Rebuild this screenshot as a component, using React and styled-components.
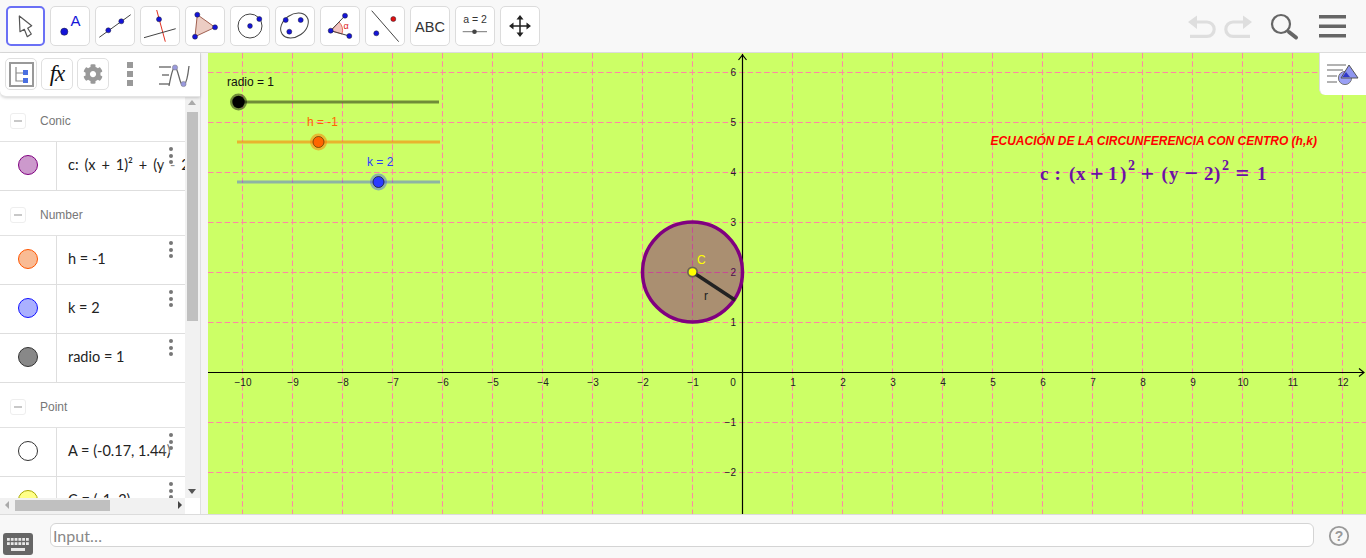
import styled, { createGlobalStyle } from 'styled-components';
import { FaCog } from 'react-icons/fa';

const GlobalStyle = createGlobalStyle`
  html, body { margin: 0; padding: 0; height: 100%; overflow: hidden; }
  #root { height: 100%; }
  * { box-sizing: border-box; }
`;

const Page = styled.div`
  width: 1366px;
  height: 558px;
  display: flex;
  flex-direction: column;
  background: #f8f8f8;
  font-family: "Liberation Sans", Arial, sans-serif;
`;

const TopBar = styled.div`
  height: 53px;
  flex: none;
  display: flex;
  align-items: flex-start;
  padding: 6px 14px 0 5px;
  gap: 5px;
  background: #f8f8f8;
  border-bottom: 1px solid #dcdcdc;
`;

const ToolButton = styled.div`
  width: ${(p) => (p.$selected ? '39px' : '40px')};
  height: 40px;
  flex: none;
  margin-left: ${(p) => (p.$selected ? '1px' : '0')};
  background: #fff;
  border-radius: 5px;
  border: ${(p) => (p.$selected ? '2px solid #6a70f5' : '1px solid #dcdcdc')};
  display: flex;
  align-items: center;
  justify-content: center;
  svg { display: block; }
`;

const ToolSvg = styled.svg`
  width: 40px;
  height: 40px;
  flex: none;
  margin: ${(p) => (p.$selected ? '-2px' : '-1px')};
`;

const RightTools = styled.div`
  margin: -6px 0 0 auto;
  display: flex;
  align-items: center;
  svg { display: block; }
`;

const Middle = styled.div`
  flex: 1;
  min-height: 0;
  display: flex;
`;

const LeftPanel = styled.div`
  width: 200px;
  flex: none;
  display: flex;
  flex-direction: column;
  background: #fff;
`;

const PanelBar = styled.div`
  height: 44px;
  flex: none;
  display: flex;
  align-items: flex-start;
  padding: 5px 0 0 5px;
  gap: 4px;
  background: #fff;
  border-bottom: 1px solid #e4e4e4;
  border-radius: 0 0 0 6px;
  box-shadow: 0 1px 3px rgba(0, 0, 0, 0.18);
  position: relative;
  z-index: 1;
`;

const PanelButton = styled.div`
  width: 32px;
  height: 32px;
  flex: none;
  border: 1px solid #e0e0e0;
  border-radius: 5px;
  background: #fff;
  display: flex;
  align-items: center;
  justify-content: center;
  color: #999;
  font-size: 20px;
`;

const FxLabel = styled.span`
  font-family: "Liberation Serif", serif;
  font-style: italic;
  font-size: 23px;
  color: #111;
  letter-spacing: -1px;
`;

const MoreBars = styled.div`
  width: 6px;
  margin-left: 14px;
  margin-top: 4px;
  display: flex;
  flex-direction: column;
  gap: 3px;
  span { height: 6px; background: #999; }
`;

const GraphIcon = styled.svg`
  flex: none;
  margin-left: 22px;
  margin-top: 3px;
`;

const ScrollArea = styled.div`
  flex: 1;
  min-height: 0;
  display: flex;
`;

const ListClip = styled.div`
  width: 185px;
  flex: none;
  overflow: hidden;
`;

const GroupHeader = styled.div`
  height: 45px;
  display: flex;
  align-items: center;
  padding: 3px 0 0 10px;
  border-bottom: 1px solid #e2e2e2;
  font-size: 12px;
  color: #777;
`;

const Collapse = styled.div`
  width: 16px;
  height: 16px;
  flex: none;
  margin-right: 14px;
  border: 1px solid #eee;
  border-radius: 3px;
  display: flex;
  align-items: center;
  justify-content: center;
  &::before {
    content: '';
    width: 8px;
    height: 2px;
    background: #c8c8c8;
  }
`;

const Row = styled.div`
  height: 49px;
  display: flex;
  position: relative;
  border-bottom: 1px solid #dedede;
`;

const MarbleCell = styled.div`
  width: 57px;
  flex: none;
  display: flex;
  align-items: center;
  justify-content: center;
  padding: 0 1px 3px 0;
  border-right: 1px solid #dedede;
`;

const Marble = styled.div`
  width: 20px;
  height: 20px;
  border-radius: 50%;
  background: ${(p) => p.$fill};
  border: 1px solid ${(p) => p.$line};
`;

const RowText = styled.div`
  padding: 0 0 3px 11px;
  display: flex;
  align-items: center;
  white-space: nowrap;
  font-family: Lato, "Noto Sans", sans-serif;
  font-size: 14.5px;
  color: #222;
  word-spacing: ${(p) => p.$spread || 0}px;
`;

const MoreDots = styled.div`
  position: absolute;
  left: 161px;
  top: 5px;
  width: 20px;
  height: 20px;
  display: flex;
  flex-direction: column;
  align-items: center;
  gap: 2.5px;
  background: ${(p) => (p.$fade ? 'linear-gradient(90deg, rgba(255,255,255,0.1), rgba(255,255,255,0.75))' : 'transparent')};
  span { width: 4px; height: 4px; border-radius: 50%; background: #777; flex: none; }
`;

const VScroll = styled.div`
  width: 15px;
  flex: none;
  display: flex;
  flex-direction: column;
  align-items: center;
  background: #f1f1f1;
  position: relative;
  padding-top: 15px;
`;

const VThumb = styled.div`
  width: 11px;
  height: 209px;
  background: #c0c0c0;
`;

const ArrowV = styled.div`
  position: absolute;
  left: 3px;
  ${(p) => (p.$up ? 'top: 3px;' : 'bottom: 4px;')}
  width: 0;
  height: 0;
  border-left: 4px solid transparent;
  border-right: 4px solid transparent;
  ${(p) => (p.$up ? 'border-bottom: 5px solid #aaa;' : 'border-top: 5px solid #555;')}
`;

const HScroll = styled.div`
  height: 16px;
  flex: none;
  display: flex;
  align-items: center;
  background: #fff;
`;

const HTrack = styled.div`
  width: 185px;
  height: 16px;
  flex: none;
  position: relative;
  background: #f1f1f1;
  padding: 2px 0 2px 15px;
`;

const HThumb = styled.div`
  width: 95px;
  height: 11px;
  background: #c0c0c0;
`;

const ArrowH = styled.div`
  position: absolute;
  top: 3px;
  ${(p) => (p.$left ? 'left: 5px;' : 'right: 3px;')}
  width: 0;
  height: 0;
  border-top: 4px solid transparent;
  border-bottom: 4px solid transparent;
  ${(p) => (p.$left ? 'border-right: 4px solid #aaa;' : 'border-left: 4px solid #444;')}
`;

const Splitter = styled.div`
  width: 8px;
  flex: none;
  background: #f5f5f5;
  border-left: 1px solid #e0e0e0;
`;

const Canvas = styled.div`
  flex: 1;
  min-width: 0;
  position: relative;
  background: #ccff66;
  svg { display: block; }
`;

const StyleTab = styled.div`
  position: absolute;
  right: 0;
  top: 0;
  width: 47px;
  height: 42px;
  background: #fff;
  border-radius: 0 0 0 6px;
  border-left: 1px solid #dcdcdc;
  display: flex;
  align-items: center;
  justify-content: center;
`;

const BottomBar = styled.div`
  height: 44px;
  flex: none;
  display: flex;
  align-items: flex-start;
  background: #f8f8f8;
  border-top: 1px solid #dcdcdc;
`;

const KeyboardBox = styled.div`
  width: 30px;
  height: 22px;
  flex: none;
  margin: 18px 17px 0 3px;
  background: #666;
  border-radius: 3px;
  svg { display: block; }
`;

const InputBox = styled.div`
  width: 1264px;
  height: 24px;
  flex: none;
  margin-top: 8px;
  padding-left: 2px;
  background: #fff;
  border: 1px solid #d4d4d4;
  border-radius: 6px;
  display: flex;
  align-items: center;
  font-family: Lato, "Noto Sans", sans-serif;
  font-size: 16px;
  color: #888;
`;

const HelpIcon = styled.div`
  margin: 10px 0 0 14px;
  svg { display: block; }
`;

const BLUE = '#1414d8';

const Dot = ({ x, y, r = 3.4, fill = BLUE }) => (
  <circle cx={x} cy={y} r={r} fill={fill} stroke="#223" strokeWidth="0.5" />
);

const toolIcons = [
  <>
    <path d="M13.3 10 L14 25.7 L18.3 23.3 L21.3 30.7 L25.3 28 L21.7 22.3 L25.7 19.7 Z" fill="#fff" stroke="#555" strokeWidth="1.2" strokeLinejoin="round" />
  </>,
  <>
    <Dot x={14.3} y={25.7} r={3.6} />
    <text x={20.5} y={20} fontSize="15" fill={BLUE} fontFamily="Liberation Sans, sans-serif">A</text>
  </>,
  <>
    <line x1="4.3" y1="31.3" x2="35.7" y2="8.7" stroke="#444" strokeWidth="1" />
    <Dot x={13.3} y={24.3} r={2.5} />
    <Dot x={26.3} y={15.3} r={2.5} />
  </>,
  <>
    <line x1="16.7" y1="4" x2="25.3" y2="35.7" stroke="#e03020" strokeWidth="1" />
    <line x1="4" y1="31.7" x2="35.7" y2="22.7" stroke="#444" strokeWidth="1" />
    <Dot x={19} y={13.3} r={2.5} />
  </>,
  <>
    <polygon points="12.3,8.7 30,21.3 10,30.7" fill="#eccdc4" stroke="#a06050" strokeWidth="1" />
    <Dot x={12.3} y={8.7} r={2.5} />
    <Dot x={30} y={21.3} r={2.5} />
    <Dot x={10} y={30.7} r={2.5} />
  </>,
  <>
    <circle cx="20" cy="20" r="12" fill="none" stroke="#444" strokeWidth="1" />
    <Dot x={20} y={20} r={2.4} />
    <Dot x={29.3} y={13} r={2.5} />
  </>,
  <>
    <ellipse cx="19.5" cy="19.5" rx="15" ry="11" transform="rotate(-35 19.5 19.5)" fill="none" stroke="#444" strokeWidth="1" />
    <Dot x={10.7} y={14} r={2.5} />
    <Dot x={14.3} y={25.7} r={2.5} />
    <Dot x={25.7} y={14} r={2.5} />
  </>,
  <>
    <path d="M10.7 24.7 L19 16 A 12 12 0 0 1 22 28 Z" fill="#f2c4c0" stroke="#e05040" strokeWidth="0.8" />
    <line x1="10.7" y1="24.7" x2="25" y2="9.7" stroke="#444" strokeWidth="1" />
    <line x1="10.7" y1="24.7" x2="29.3" y2="30" stroke="#444" strokeWidth="1" />
    <Dot x={25} y={9.7} r={2.5} />
    <Dot x={10.7} y={24.7} r={2.5} />
    <Dot x={29.3} y={30} r={2.5} />
    <text x={23.5} y={23} fontSize="9" fill="#e02020" fontFamily="Liberation Sans, sans-serif">α</text>
  </>,
  <>
    <line x1="6.7" y1="4.7" x2="33.7" y2="35.7" stroke="#444" strokeWidth="1" />
    <Dot x={28.3} y={13} r={2.5} fill="#e01010" />
    <Dot x={11.3} y={27.3} r={2.5} />
  </>,
  <text x="20" y="25.5" textAnchor="middle" fontSize="14.5" fill="#333" fontFamily="Liberation Sans, sans-serif">ABC</text>,
  <>
    <text x="20" y="17" textAnchor="middle" fontSize="10.5" fill="#333" fontFamily="Liberation Sans, sans-serif">a = 2</text>
    <line x1="7.7" y1="25.7" x2="32" y2="25.7" stroke="#777" strokeWidth="1" />
    <circle cx="19.5" cy="25.7" r="2.3" fill="#444" />
  </>,
  <>
    <path d="M20 11 V29 M11 20 H29" stroke="#222" strokeWidth="1.5" />
    <path d="M20 9 L23.5 13.5 H16.5 Z M20 31 L23.5 26.5 H16.5 Z M9 20 L13.5 16.5 V23.5 Z M31 20 L26.5 16.5 V23.5 Z" fill="#222" />
  </>,
];

const groups = [
  {
    name: 'Conic',
    rows: [{ text: 'c: (x + 1)² + (y - 2)² = 1', fill: '#cc99cc', line: '#800080', fade: true, spread: 2.2 }],
  },
  {
    name: 'Number',
    rows: [
      { text: 'h = -1', fill: '#f9bb94', line: '#ff5500' },
      { text: 'k = 2', fill: '#aab0ff', line: '#1010ff' },
      { text: 'radio = 1', fill: '#888888', line: '#333333' },
    ],
  },
  {
    name: 'Point',
    rows: [
      { text: 'A = (-0.17, 1.44)', fill: '#ffffff', line: '#333333', fade: true },
      { text: 'C = (-1, 2)', fill: '#ffff88', line: '#a8a800' },
    ],
  },
];

const xLines = Array.from({ length: 23 }, (_, i) => i - 10);
const yLines = [-2, -1, 1, 2, 3, 4, 5, 6];
const X0 = 742.5;
const Y0 = 372.5;
const tickFont = { fontFamily: 'Liberation Sans, sans-serif', fontSize: 10, fill: '#222' };
const labelFont = 'Liberation Sans, sans-serif';

// each glyph of the equation sits at its own x, like the typeset formula
const equation = [
  ['c', 1040], [':', 1054.5], ['(', 1069], ['x', 1076], ['1', 1108], [')', 1120],
  ['(', 1161.5], ['y', 1169], ['2', 1204], [')', 1214], ['1', 1257],
];
const operators = [['+', 1090], ['+', 1140.5], ['−', 1184.5], ['=', 1235.5]];
const powers = [1128, 1222];

function Graph() {
  return (
    <svg width="1158" height="461" viewBox="208 53 1158 461">
      {/* grid */}
      <g stroke="#ff85a5" strokeWidth="1" strokeDasharray="5.5 2.8">
        {xLines.map((k) => (
          <line key={k} x1={X0 + k * 50} y1="53" x2={X0 + k * 50} y2="514" />
        ))}
        {[-6, -5, -4, -3, -2, -1, 1, 2].map((k) => (
          <line key={k} x1="208" y1={Y0 + k * 50} x2="1366" y2={Y0 + k * 50} />
        ))}
      </g>

      {/* axes */}
      <g stroke="#000" strokeWidth="1.2" fill="none">
        <line x1="208" y1={Y0} x2="1364" y2={Y0} />
        <line x1={X0} y1="54" x2={X0} y2="514" />
        <path d={`M1359 ${Y0 - 4} L1364 ${Y0} L1359 ${Y0 + 4}`} />
        <path d={`M${X0 - 4} 60 L${X0} 55 L${X0 + 4} 60`} />
      </g>
      {xLines.filter((k) => k !== 0).map((k) => (
        <text key={k} x={X0 + k * 50 + 0.5} y="386" textAnchor="middle" {...tickFont}>
          {k < 0 ? `−${-k}` : k}
        </text>
      ))}
      <text x="733" y="386" textAnchor="middle" {...tickFont}>0</text>
      {yLines.map((k) => (
        <text key={k} x="736" y={Y0 - k * 50 + 3.5} textAnchor="end" {...tickFont}>
          {k < 0 ? `−${-k}` : k}
        </text>
      ))}

      {/* sliders */}
      <line x1="238" y1="102" x2="439" y2="102" stroke="#000" strokeOpacity="0.45" strokeWidth="3" />
      <circle cx="238.5" cy="102" r="8.5" fill="#000" fillOpacity="0.45" />
      <circle cx="238.5" cy="102" r="6.2" fill="#000" />
      <text x="227" y="86" fontSize="12" fill="#111" fontFamily={labelFont}>radio = 1</text>

      <line x1="237" y1="142" x2="440" y2="142" stroke="#ff7700" strokeOpacity="0.55" strokeWidth="3" />
      <circle cx="318.5" cy="142" r="8.5" fill="#ff7700" fillOpacity="0.5" />
      <circle cx="318.5" cy="142" r="5.5" fill="#ff6600" stroke="#553300" strokeWidth="0.7" />
      <text x="307" y="126" fontSize="12" fill="#ff6600" fontFamily={labelFont}>h = -1</text>

      <line x1="237" y1="182" x2="440" y2="182" stroke="#3344ff" strokeOpacity="0.4" strokeWidth="3" />
      <circle cx="378.5" cy="182" r="8.5" fill="#3344ff" fillOpacity="0.4" />
      <circle cx="378.5" cy="182" r="5.5" fill="#2a3cff" stroke="#112" strokeWidth="0.7" />
      <text x="367" y="166" fontSize="12" fill="#2a3cff" fontFamily={labelFont}>k = 2</text>

      {/* circle c with radius */}
      <circle cx="692.5" cy="272" r="50" fill="#800080" fillOpacity="0.44" stroke="#800080" strokeWidth="3.5" />
      <line x1="692.5" y1="272" x2="735" y2="300" stroke="#222" strokeWidth="3.5" />
      <circle cx="692.5" cy="272" r="5.5" fill="#444" fillOpacity="0.6" />
      <circle cx="692.5" cy="272" r="3.8" fill="#ffff00" />
      <text x="697" y="264" fontSize="12" fill="#ffff00" fontFamily={labelFont}>C</text>
      <text x="704" y="300" fontSize="12" fill="#222" fontFamily={labelFont}>r</text>

      {/* title and equation */}
      <text x="990.5" y="145" fontSize="12" fontWeight="bold" fontStyle="italic" fill="#ff0000" fontFamily={labelFont}>
        ECUACIÓN DE LA CIRCUNFERENCIA CON CENTRO (h,k)
      </text>
      <g fontWeight="bold" fill="#6b10a5" fontFamily="Liberation Serif, serif">
        {equation.map(([g, x], i) => <text key={i} x={x} y="180" fontSize="19">{g}</text>)}
        {operators.map(([g, x], i) => <text key={i} x={x} y="181" fontSize="24">{g}</text>)}
        {powers.map((x) => <text key={x} x={x} y="170" fontSize="14">2</text>)}
      </g>
    </svg>
  );
}

export default function App() {
  return (
    <Page>
      <GlobalStyle />
      <TopBar>
        {toolIcons.map((icon, i) => (
          <ToolButton key={i} $selected={i === 0}>
            <ToolSvg viewBox="0 0 40 40" $selected={i === 0}>{icon}</ToolSvg>
          </ToolButton>
        ))}
        <RightTools>
          <svg width="170" height="46" viewBox="1182 0 170 46">
            <g fill="none" stroke="#dedede" strokeWidth="3.2">
              <path d="M1195 22 H1207 A7 7 0 0 1 1207 36.4 H1190" />
              <path d="M1245 22 H1233 A7 7 0 0 0 1233 36.4 H1250" />
            </g>
            <path d="M1188 22 L1197 15.5 V29 Z M1252 22 L1243 15.5 V29 Z" fill="#dedede" />
            <circle cx="1281" cy="24" r="9" fill="none" stroke="#666" strokeWidth="2.2" />
            <line x1="1289" y1="32" x2="1296" y2="37.5" stroke="#666" strokeWidth="4" strokeLinecap="round" />
            <g fill="#666">
              <rect x="1319" y="15" width="27" height="3.5" />
              <rect x="1319" y="24.5" width="27" height="3.5" />
              <rect x="1319" y="34" width="27" height="3.5" />
            </g>
          </svg>
        </RightTools>
      </TopBar>

      <Middle>
        <LeftPanel>
          <PanelBar>
            <PanelButton>
              <svg width="25" height="25" viewBox="0 0 25 25">
                <rect x="1" y="1" width="23" height="23" fill="none" stroke="#999" strokeWidth="2" />
                <path d="M7 5 V19 H14 M7 11 H14" fill="none" stroke="#888" strokeWidth="1.2" />
                <rect x="14" y="8" width="5" height="5" fill="#4a6fe0" />
                <rect x="14" y="16" width="5" height="5" fill="#4a6fe0" />
              </svg>
            </PanelButton>
            <PanelButton><FxLabel>fx</FxLabel></PanelButton>
            <PanelButton><FaCog /></PanelButton>
            <MoreBars><span /><span /><span /></MoreBars>
            <GraphIcon width="32" height="32" viewBox="0 0 32 32">
              <path d="M0 6 H12 M3 14 H10 M0 23 H10" stroke="#999" strokeWidth="2" fill="none" />
              <path d="M10 25 C13 9 15 4 17 7 C20 12 21 26 25 24 C28 22 29 14 30 5" stroke="#666" strokeWidth="1.3" fill="none" />
              <circle cx="16" cy="6.5" r="2.6" fill="#9999dd" stroke="#777" strokeWidth="0.5" />
              <circle cx="24.5" cy="23" r="2.6" fill="#9999dd" stroke="#777" strokeWidth="0.5" />
            </GraphIcon>
          </PanelBar>
          <ScrollArea>
            <ListClip>
              {groups.map((g) => (
                <div key={g.name}>
                  <GroupHeader>
                    <Collapse />
                    {g.name}
                  </GroupHeader>
                  {g.rows.map((r) => (
                    <Row key={r.text}>
                      <MarbleCell><Marble $fill={r.fill} $line={r.line} /></MarbleCell>
                      <RowText $spread={r.spread}>{r.text}</RowText>
                      <MoreDots $fade={r.fade}><span /><span /><span /></MoreDots>
                    </Row>
                  ))}
                </div>
              ))}
            </ListClip>
            <VScroll>
              <ArrowV $up />
              <VThumb />
              <ArrowV />
            </VScroll>
          </ScrollArea>
          <HScroll>
            <HTrack>
              <ArrowH $left />
              <HThumb />
              <ArrowH />
            </HTrack>
          </HScroll>
        </LeftPanel>
        <Splitter />
        <Canvas>
          <Graph />
          <StyleTab>
            <svg width="34" height="26" viewBox="0 0 34 26">
              <path d="M1 4 H20 M1 9 H17 M1 15 H11 M1 21 H11" stroke="#999" strokeWidth="1.6" />
              <circle cx="19" cy="17" r="6.6" fill="#9aa0f5" stroke="#777" strokeWidth="1" />
              <polygon points="23,4 32,17 15,17" fill="#8f96f0" stroke="#555" strokeWidth="1" />
              <polygon points="20,11 24,16 16.5,16" fill="#3038c8" />
            </svg>
          </StyleTab>
        </Canvas>
      </Middle>

      <BottomBar>
        <KeyboardBox>
          <svg width="30" height="22" viewBox="0 0 30 22">
            <g fill="#e8e8e8">
              {[0, 1, 2, 3, 4, 5].map((i) => <rect key={i} x={4 + i * 3.8} y="5" width="2.8" height="2.8" />)}
              {[0, 1, 2, 3, 4, 5].map((i) => <rect key={i} x={4 + i * 3.8} y="9.2" width="2.8" height="2.8" />)}
              <rect x="8" y="15" width="14" height="3" />
            </g>
          </svg>
        </KeyboardBox>
        <InputBox>Input…</InputBox>
        <HelpIcon>
          <svg width="22" height="22" viewBox="0 0 22 22">
            <circle cx="11" cy="11" r="9.2" fill="none" stroke="#999" strokeWidth="1.8" />
            <text x="11" y="16" textAnchor="middle" fontSize="14" fontWeight="bold" fill="#999" fontFamily="Liberation Sans, sans-serif">?</text>
          </svg>
        </HelpIcon>
      </BottomBar>
    </Page>
  );
}
